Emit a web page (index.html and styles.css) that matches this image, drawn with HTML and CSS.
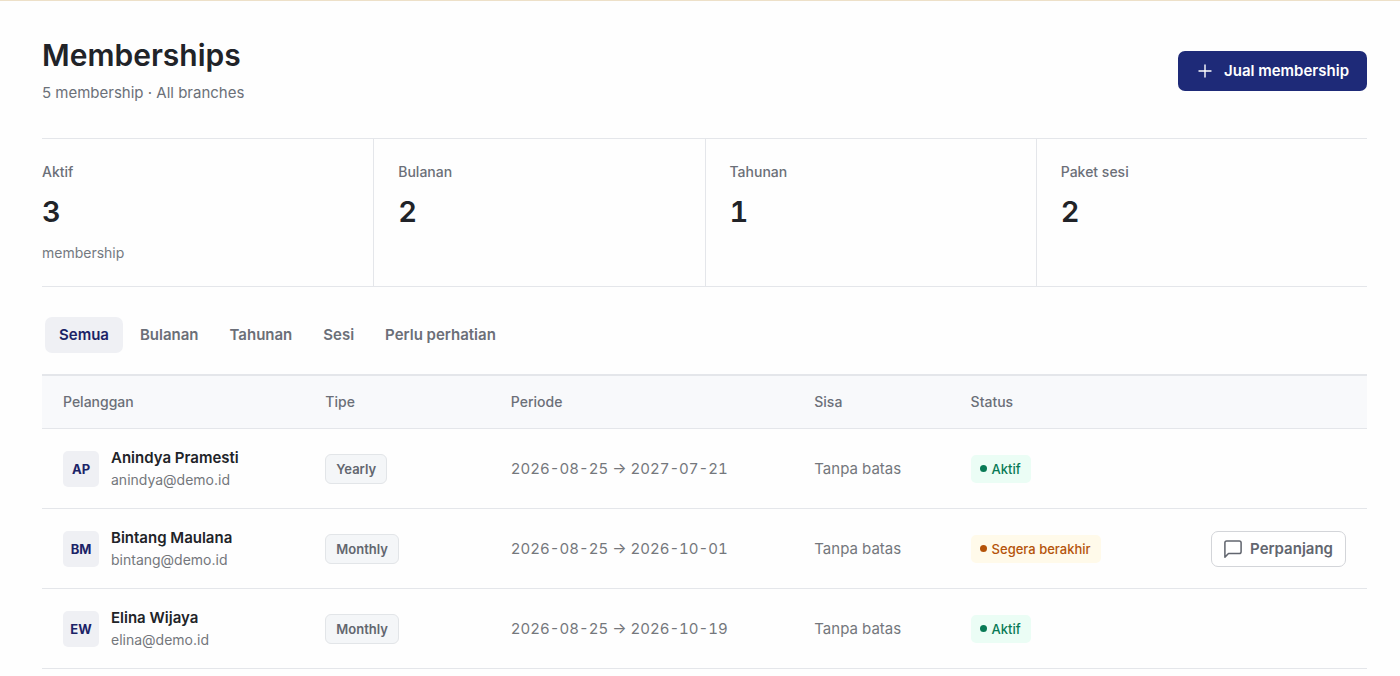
FILE: index.html
```html
<!DOCTYPE html>
<html lang="id">
<head>
<meta charset="utf-8">
<meta name="viewport" content="width=device-width, initial-scale=1">
<title>Memberships</title>
<link rel="stylesheet" href="styles.css">
</head>
<body>
<main class="page">
  <header class="page-header">
    <div>
      <h1 class="title">Memberships</h1>
      <p class="subtitle">5 membership · All branches</p>
    </div>
    <button class="button button-primary" type="button">
      <svg class="icon-plus" viewBox="0 0 18 18" aria-hidden="true"><path d="M9 3v12M3 9h12"/></svg>
      Jual membership
    </button>
  </header>

  <section class="stats">
    <div class="stat"><span class="stat-label">Aktif</span><strong class="stat-value">3</strong><span class="stat-note">membership</span></div>
    <div class="stat"><span class="stat-label">Bulanan</span><strong class="stat-value">2</strong></div>
    <div class="stat"><span class="stat-label">Tahunan</span><strong class="stat-value">1</strong></div>
    <div class="stat"><span class="stat-label">Paket sesi</span><strong class="stat-value">2</strong></div>
  </section>

  <nav class="tabs">
    <button class="tab tab-active" type="button">Semua</button>
    <button class="tab" type="button">Bulanan</button>
    <button class="tab" type="button">Tahunan</button>
    <button class="tab" type="button">Sesi</button>
    <button class="tab" type="button">Perlu perhatian</button>
  </nav>

  <table class="members">
    <colgroup>
      <col class="col-customer"><col class="col-type"><col class="col-period"><col class="col-left"><col class="col-status"><col>
    </colgroup>
    <thead>
      <tr><th>Pelanggan</th><th>Tipe</th><th>Periode</th><th>Sisa</th><th>Status</th><th></th></tr>
    </thead>
    <tbody>
      <tr>
        <td><div class="customer"><span class="avatar">AP</span><div><div class="name">Anindya Pramesti</div><div class="email">anindya@demo.id</div></div></div></td>
        <td><span class="type">Yearly</span></td>
        <td class="period">2026-08-25 → 2027-07-21</td>
        <td>Tanpa batas</td>
        <td><span class="status status-active">Aktif</span></td>
        <td></td>
      </tr>
      <tr>
        <td><div class="customer"><span class="avatar">BM</span><div><div class="name">Bintang Maulana</div><div class="email">bintang@demo.id</div></div></div></td>
        <td><span class="type">Monthly</span></td>
        <td class="period">2026-08-25 → 2026-10-01</td>
        <td>Tanpa batas</td>
        <td><span class="status status-ending">Segera berakhir</span></td>
        <td class="actions">
          <button class="button button-outline" type="button">
            <svg class="icon-message" viewBox="2 2 20 20" aria-hidden="true"><path d="M21 15a2 2 0 0 1-2 2H7l-4 4V5a2 2 0 0 1 2-2h14a2 2 0 0 1 2 2z"/></svg>
            Perpanjang
          </button>
        </td>
      </tr>
      <tr>
        <td><div class="customer"><span class="avatar">EW</span><div><div class="name">Elina Wijaya</div><div class="email">elina@demo.id</div></div></div></td>
        <td><span class="type">Monthly</span></td>
        <td class="period">2026-08-25 → 2026-10-19</td>
        <td>Tanpa batas</td>
        <td><span class="status status-active">Aktif</span></td>
        <td></td>
      </tr>
    </tbody>
  </table>
</main>
</body>
</html>
```

FILE: styles.css
```css
* { box-sizing: border-box; }

body {
  margin: 0;
  background: #fefefe;
  color: #212328;
  font-family: Inter, "Liberation Sans", sans-serif;
  font-size: 15px;
  line-height: 20px;
}

button { font: inherit; cursor: pointer; }

.page {
  border-top: 1px solid #ede0c8;
  padding: 35px 33px 0 42px;
}

.page-header {
  display: flex;
  align-items: center;
  justify-content: space-between;
  padding-bottom: 33px;
}

.title {
  margin: 0;
  font-size: 30px;
  font-weight: 600;
  line-height: 38px;
}

.subtitle {
  margin: 7px 0 0;
  color: #6b7078;
  line-height: 24px;
}

.button {
  display: inline-flex;
  align-items: center;
  border-radius: 7px;
  font-weight: 600;
  white-space: nowrap;
}

.button-primary {
  gap: 10px;
  height: 40px;
  padding: 0 18px;
  border: 0;
  background: #1e2a78;
  color: #fff;
}

.button-outline {
  gap: 8px;
  height: 36px;
  padding: 0 12px;
  border: 1px solid #d3d5d9;
  background: #fff;
  color: #62666f;
}

.icon-plus, .icon-message {
  width: 18px;
  height: 18px;
  fill: none;
  stroke: currentColor;
  stroke-linecap: round;
  stroke-linejoin: round;
}

.icon-plus { stroke-width: 1.4; }
.icon-message { stroke-width: 1.7; }

.stats {
  display: grid;
  grid-template-columns: repeat(4, 1fr);
  border-top: 1px solid #e4e6ea;
  border-bottom: 1px solid #e4e6ea;
}

.stat {
  display: flex;
  flex-direction: column;
  padding: 23px 24px;
}

.stat:first-child { padding-left: 0; }
.stat + .stat { border-left: 1px solid #e4e6ea; }

.stat-label {
  color: #6b6f78;
  font-size: 14px;
  font-weight: 500;
}

.stat-value {
  margin: 10px 0 11px;
  font-size: 29px;
  font-weight: 600;
  line-height: 40px;
  font-variant-numeric: tabular-nums;
}

.stat-note {
  color: #747981;
  font-size: 14px;
}

.tabs {
  display: flex;
  gap: 3px;
  padding: 30px 3px 21px;
}

.tab {
  height: 36px;
  padding: 0 14px;
  border: 0;
  border-radius: 7px;
  background: transparent;
  color: #6b6f78;
  font-weight: 600;
}

.tab-active {
  background: #eff0f4;
  color: #1b2367;
}

.members {
  width: 100%;
  table-layout: fixed;
  border-collapse: separate;
  border-spacing: 0;
  border-top: 2px solid #e4e6ea;
}

.col-customer { width: 19.8%; }
.col-type { width: 14%; }
.col-period { width: 22.9%; }
.col-left { width: 11.8%; }
.col-status { width: 16%; }

.members th {
  height: 53px;
  padding: 0 21px;
  border-bottom: 1px solid #e4e6ea;
  background: #f8f9fb;
  color: #6b6f78;
  font-size: 14px;
  font-weight: 500;
  text-align: left;
}

.members td {
  height: 80px;
  padding: 0 21px;
  border-bottom: 1px solid #e4e6ea;
  color: #74777c;
  white-space: nowrap;
}

.customer {
  display: flex;
  align-items: center;
  gap: 12px;
}

.avatar {
  display: grid;
  place-items: center;
  width: 36px;
  height: 36px;
  border-radius: 5px;
  background: #eff0f4;
  color: #1b2367;
  font-size: 13px;
  font-weight: 700;
}

.name {
  color: #212328;
  font-weight: 600;
  line-height: 22px;
}

.email {
  font-size: 14px;
  line-height: 22px;
}

.type {
  display: inline-block;
  padding: 4px 10px;
  border: 1px solid #e2e5e8;
  border-radius: 6px;
  background: #f4f6f8;
  color: #62666f;
  font-size: 13px;
  font-weight: 600;
}

.period { font-variant-numeric: tabular-nums; }

.status {
  display: inline-flex;
  align-items: center;
  gap: 5px;
  padding: 4px 10px 4px 9px;
  border-radius: 5px;
  font-size: 13px;
  font-weight: 500;
}

.status::before {
  content: "";
  width: 7px;
  height: 7px;
  border-radius: 50%;
  background: currentColor;
}

.status-active {
  background: #ebfdf5;
  color: #087a55;
}

.status-ending {
  background: #fffaea;
  color: #b45309;
}

.members .actions { text-align: right; }
```
